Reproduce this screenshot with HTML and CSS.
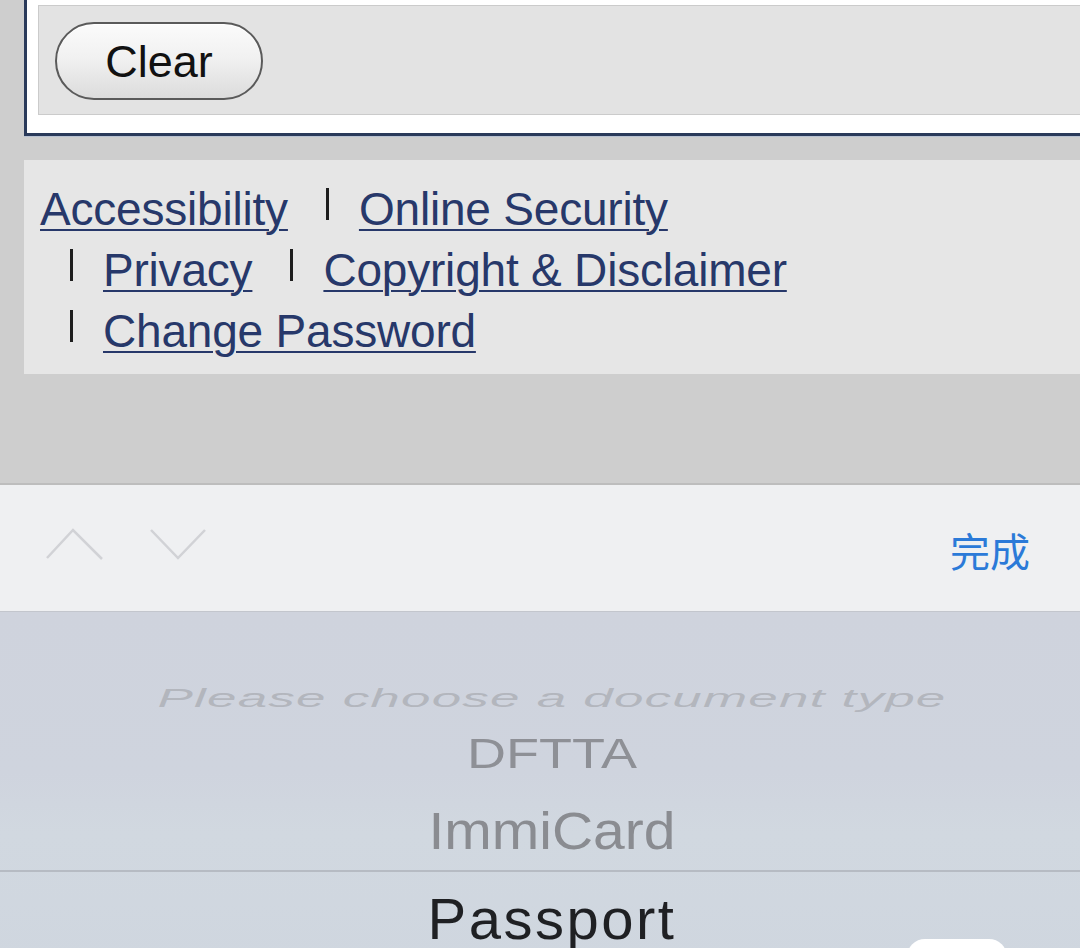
FILE: index.html
```html
<!DOCTYPE html>
<html lang="en">
<head>
<meta charset="utf-8">
<title>Document type</title>
<link rel="stylesheet" href="styles.css">
</head>
<body>
<div class="page">
  <section class="form-panel">
    <div class="actions">
      <button class="btn-clear" type="button">Clear</button>
    </div>
  </section>

  <footer class="site-footer">
    <ul class="footer-links">
      <li class="link-item"><a href="#">Accessibility</a></li>
      <li class="link-item sep-item"><span class="sep" aria-hidden="true"></span><a href="#">Online Security</a></li>
      <li class="link-item sep-item"><span class="sep" aria-hidden="true"></span><a href="#">Privacy</a></li>
      <li class="link-item sep-item"><span class="sep" aria-hidden="true"></span><a href="#">Copyright &amp; Disclaimer</a></li>
      <li class="link-item sep-item"><span class="sep" aria-hidden="true"></span><a href="#">Change Password</a></li>
    </ul>
  </footer>

  <div class="keyboard">
    <div class="toolbar">
      <div class="nav-arrows">
        <svg class="chev chev-up" width="58" height="34" viewBox="0 0 58 34"><polyline points="1,30 27,2 56,31" fill="none" stroke="#d1d2d6" stroke-width="2.5"/></svg>
        <svg class="chev chev-down" width="58" height="34" viewBox="0 0 58 34"><polyline points="2,2 29,30 56,2" fill="none" stroke="#d1d2d6" stroke-width="2.5"/></svg>
      </div>
      <span class="done">完成</span>
    </div>
    <div class="picker">
      <div class="row row-1"><span class="opt opt-placeholder">Please choose a document type</span></div>
      <div class="row row-2"><span class="opt opt-dftta">DFTTA</span></div>
      <div class="row row-3"><span class="opt opt-immi">ImmiCard</span></div>
      <div class="row row-sel"><span class="opt opt-passport">Passport</span></div>
      <div class="float-pill"></div>
    </div>
  </div>
</div>
</body>
</html>
```

FILE: styles.css
```css
* { box-sizing: border-box; }

html, body {
  margin: 0;
  padding: 0;
}

body {
  width: 1080px;
  height: 948px;
  overflow: hidden;
  background: #cecece;
  font-family: "Liberation Sans", Arial, "Noto Sans CJK SC", sans-serif;
}

.page {
  display: flex;
  flex-direction: column;
  width: 1080px;
  height: 948px;
  overflow: hidden;
}

.page > * { flex-shrink: 0; }

/* ---------- form panel ---------- */
.form-panel {
  margin-left: 24px;
  margin-right: -20px;
  background: #ffffff;
  border-left: 3px solid #2a3a5a;
  border-bottom: 3px solid #2a3a5a;
  box-shadow: 0 1px 0 #b8c2d2;
  padding: 5px 0 18px 11px;
}

.actions {
  background: #e3e3e3;
  border: 1px solid #cbcbcb;
  border-right: none;
  padding: 16px 0 14px 16px;
  display: flex;
}

.btn-clear {
  width: 208px;
  height: 78px;
  border: 2px solid #5a5a5a;
  border-radius: 40px;
  background: linear-gradient(#fbfbfb 0%, #f1f1f1 45%, #dcdcdc 100%);
  box-shadow: inset 0 1px 0 #ffffff;
  font-family: "Liberation Sans", Arial, sans-serif;
  font-size: 45px;
  color: #111;
  padding: 0;
  line-height: 1;
}

/* ---------- footer ---------- */
.site-footer {
  margin-top: 24px;
  margin-left: 24px;
  height: 214px;
  background: #e6e6e6;
  padding: 19px 0 0 16px;
}

.footer-links {
  list-style: none;
  margin: 0;
  padding: 0;
  width: 820px;
  display: flex;
  flex-wrap: wrap;
  column-gap: 8px;
  font-size: 46px;
  line-height: 61px;
  letter-spacing: -0.2px;
}

.link-item {
  display: flex;
  align-items: center;
}

.sep-item {
  padding-left: 30px;
}

.sep {
  display: inline-block;
  width: 3px;
  height: 32px;
  background: #1e1e1e;
  margin-right: 30px;
  position: relative;
  top: -6px;
}

.footer-links a {
  color: #27386a;
  text-decoration: underline;
  text-decoration-thickness: 2px;
  text-underline-offset: 4px;
}

/* ---------- keyboard accessory ---------- */
.keyboard {
  margin-top: 109px;
  flex: 1 0 auto;
  display: flex;
  flex-direction: column;
}

.toolbar {
  flex-shrink: 0;
  height: 129px;
  background: #eff0f2;
  border-top: 2px solid #bdbdbd;
  border-bottom: 1px solid #c3c6cd;
  display: flex;
  align-items: center;
  justify-content: space-between;
  padding: 0 50px 0 46px;
}

.nav-arrows {
  display: flex;
  gap: 45px;
  margin-top: -6px;
}

.chev { display: block; }

.done {
  font-family: "Noto Sans CJK SC", "Liberation Sans", sans-serif;
  font-size: 40px;
  color: #2b7ad8;
  margin-top: 4px;
}

/* ---------- picker ---------- */
.picker {
  position: relative;
  flex: 1 0 auto;
  background: linear-gradient(#cfd3dd 0%, #cfd4de 45%, #d1d8e0 62%, #cfd6df 100%);
  padding-top: 57px;
  overflow: hidden;
}

.row {
  display: flex;
  justify-content: center;
  align-items: center;
  padding-left: 24px;
  flex-shrink: 0;
}

.opt {
  display: inline-block;
  white-space: nowrap;
}

.row-1 { height: 56px; }
.row-2 { height: 56px; }
.row-3 { height: 89px; padding-top: 11px; }

.row-sel {
  height: 100px;
  border-top: 2px solid #b6bbc3;
  padding-bottom: 6px;
}

.opt-placeholder {
  font-size: 53px;
  font-style: italic;
  letter-spacing: 1.2px;
  color: #b3b6bd;
  transform: scaleY(0.5);
}

.opt-dftta {
  font-size: 54px;
  color: #8e9096;
  transform: scaleY(0.8);
}

.opt-immi {
  font-size: 57px;
  color: #8a8c91;
  transform: scaleY(0.92);
}

.opt-passport {
  font-size: 58px;
  letter-spacing: 2.5px;
  color: #1f2023;
}

.float-pill {
  position: absolute;
  left: 907px;
  top: 327px;
  width: 100px;
  height: 40px;
  border-radius: 18px;
  background: #ffffff;
}
```
